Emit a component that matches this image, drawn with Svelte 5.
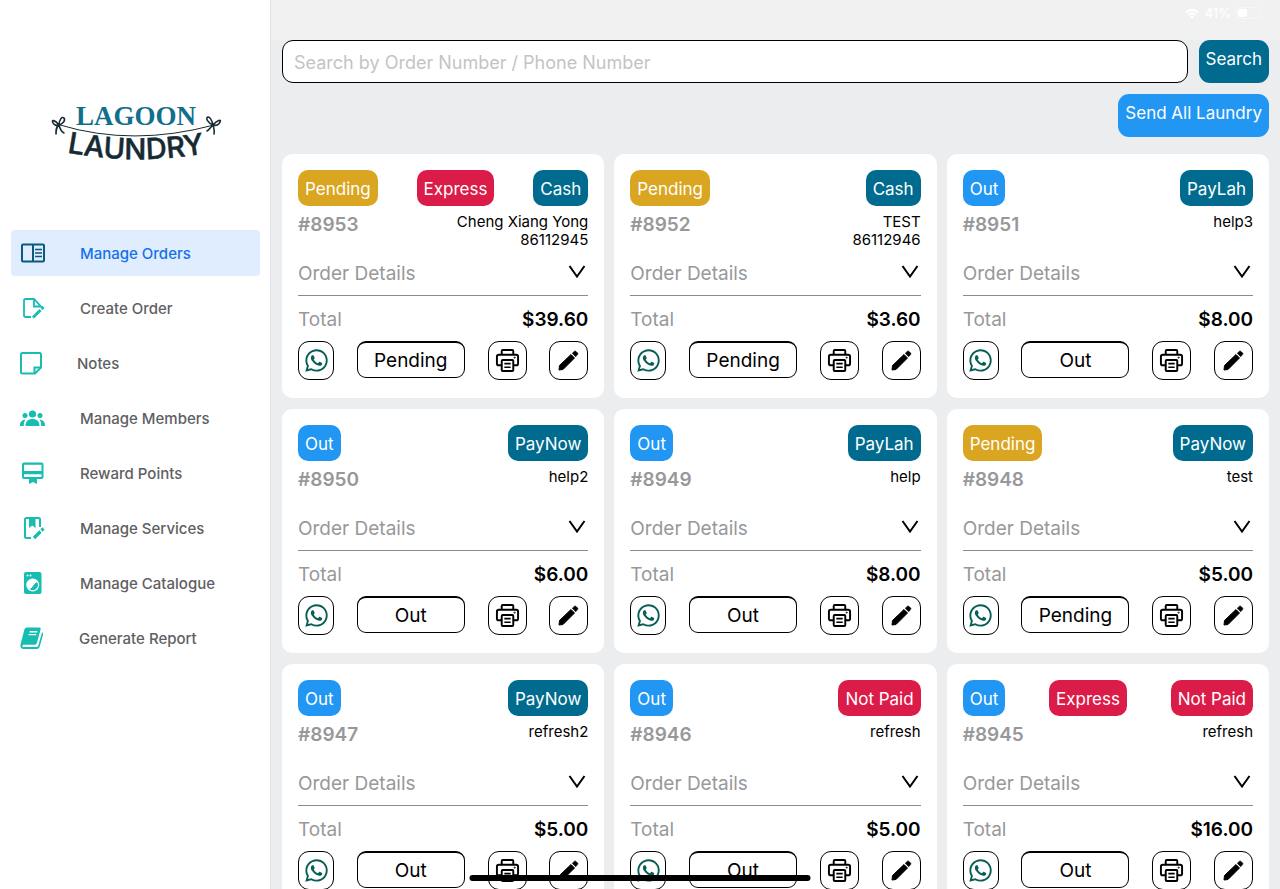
<script>
  const nav = [
    { label: 'Manage Orders', icon: 'orders', active: true },
    { label: 'Create Order', icon: 'create' },
    { label: 'Notes', icon: 'notes' },
    { label: 'Manage Members', icon: 'members' },
    { label: 'Reward Points', icon: 'reward' },
    { label: 'Manage Services', icon: 'services' },
    { label: 'Manage Catalogue', icon: 'catalogue' },
    { label: 'Generate Report', icon: 'report' }
  ];

  const orders = [
    { id: 8953, status: 'Pending', express: true, pay: 'Cash', name: 'Cheng Xiang Yong', phone: '86112945', total: '39.60' },
    { id: 8952, status: 'Pending', pay: 'Cash', name: 'TEST', phone: '86112946', total: '3.60' },
    { id: 8951, status: 'Out', pay: 'PayLah', name: 'help3', total: '8.00' },
    { id: 8950, status: 'Out', pay: 'PayNow', name: 'help2', total: '6.00' },
    { id: 8949, status: 'Out', pay: 'PayLah', name: 'help', total: '8.00' },
    { id: 8948, status: 'Pending', pay: 'PayNow', name: 'test', total: '5.00' },
    { id: 8947, status: 'Out', pay: 'PayNow', name: 'refresh2', total: '5.00' },
    { id: 8946, status: 'Out', pay: 'Not Paid', name: 'refresh', total: '5.00' },
    { id: 8945, status: 'Out', express: true, pay: 'Not Paid', name: 'refresh', total: '16.00' }
  ];
</script>

<div class="app">
  <aside class="sidebar">
    <svg class="logo" viewBox="0 0 180 74" role="img" aria-label="Lagoon Laundry">
      <defs><path id="line" d="M18 51 Q90 65 162 52" /></defs>
      <text class="lagoon" x="90" y="24" text-anchor="middle">LAGOON</text>
      <text class="laundry"><textPath href="#line" startOffset="50%" text-anchor="middle">LAUNDRY</textPath></text>
      <g fill="none" stroke="#152a31" stroke-linecap="round" stroke-linejoin="round">
        <path stroke-width="1" d="M14 24 Q87 46 168 24" />
        <path stroke-width="1.6" d="M13 24 C9 19 5 18 7 22 C8 24 11 25 13 24 C13 19 16 15 18 17 C20 20 16 23 13 24 C10 26 10 29 10 33 M13 24 C14 28 16 31 18 32" />
        <path stroke-width="1.6" d="M167 24 C162 22 159 17 162 16 C165 16 166 20 167 24 C171 19 176 18 174 21 C173 24 170 25 167 24 C164 27 163 29 161 30 M167 24 C168 28 169 30 168 33" />
      </g>
    </svg>
    <nav>
      {#each nav as item}
        <a href="#{item.icon}" class:active={item.active} aria-current={item.active ? 'page' : undefined}>
          <svg class="nav-icon {item.icon}" viewBox={item.icon === 'notes' ? '0 0 22 24' : '0 0 25 24'} aria-hidden="true">
            {#if item.icon === 'orders'}
              <g fill="none" stroke="currentColor" stroke-width="2"><rect x="2" y="3.5" width="22" height="17" rx="1" /><path d="M13 4v16" /><path stroke-width="1.6" d="M15 8.500h7M15 12h7M15 15.500h7" /></g>
            {:else if item.icon === 'create'}
              <g fill="none" stroke="currentColor" stroke-width="1.8"><path d="M11 21H5.500Q4 21 4 19.500V4.500Q4 3 5.500 3H14L21 10.500H14V3" /><path stroke-width="3" d="M13 21.500l7.500-7.500M21.500 13l2-2" /></g>
            {:else if item.icon === 'notes'}
              <g fill="none" stroke="currentColor" stroke-width="2"><path d="M2.500 2H19.500Q21 2 21 3.500V16.500L15 22.500H2.500Q1 22.500 1 21V3.500Q1 2 2.500 2z" /><path d="M14.500 22.500V16.500H21" /></g>
            {:else if item.icon === 'members'}
              <g fill="currentColor"><circle cx="12.500" cy="8" r="3.600" /><circle cx="5" cy="9.500" r="2.500" /><circle cx="20" cy="9.500" r="2.500" /><path d="M5.500 20C5.500 15.500 8 13 12.500 13s7 2.500 7 7zM0 20c0-4 1.500-6 5.500-6.500C4 15.500 3.800 17 3.800 20zM25 20c0-4-1.500-6-5.500-6.500C21 15.500 21.200 17 21.200 20z" /></g>
            {:else if item.icon === 'reward'}
              <path fill="currentColor" fill-rule="evenodd" d="M4 1.500H21.500Q23.500 1.500 23.500 3.500V16Q23.500 18 21.500 18H17v5l-4-2-4 2v-5H4Q2 18 2 16V3.500Q2 1.500 4 1.500zM4 3.700V10H21.500V3.700zM4 13.200V16H21.500V13.200z" />
            {:else if item.icon === 'services'}
              <g fill="none" stroke="currentColor" stroke-width="2"><path d="M11 22H6.500Q5 22 5 20.500V3.500Q5 2 6.500 2H18.500Q20 2 20 3.500V11" /><path fill="currentColor" stroke="none" d="M9 2h6.500v10L12.200 9.500 9 12z" /><path stroke-width="3.200" d="M14 22l6.500-6.500M21.500 14.500l2-2" /></g>
            {:else if item.icon === 'catalogue'}
              <rect x="4" y="1" width="17.500" height="22" rx="2" fill="currentColor" /><g fill="#fff"><circle cx="7.500" cy="4.500" r="1" /><circle cx="10.500" cy="4.500" r="1" /></g><circle cx="12.700" cy="14" r="6.500" fill="#fff" /><path fill="currentColor" d="M17 11A5.200 5.200 0 0 1 9.500 18Q12 17 13.300 14.500T17 11z" />
            {:else}
              <path fill="currentColor" d="M7 1H20Q22 1 21.500 3L17.500 17.500Q17 19 15.500 19H4Q2.500 19 2.500 20.300T4 21.500H17Q18.500 21.500 19 20L23 6Q24.500 6.500 24 8.500L20.500 21Q19.800 23.500 17.500 23.500H4Q0 23.500 .5 19L4.500 3.500Q5.200 1 7 1z" /><path stroke="#fff" stroke-width="1.500" d="M10 5.500h8M9 8.500h8" />
            {/if}
          </svg>
          <span>{item.label}</span>
        </a>
      {/each}
    </nav>
  </aside>

  <main>
    <div class="statusbar">
      <svg width="14" height="11" viewBox="0 0 14 11" aria-hidden="true"><path fill="none" stroke="#fff" stroke-width="2" d="M1 4.500Q7-1 13 4.500M3.300 7Q7 3.500 10.700 7" /><path fill="#fff" d="M4.800 8.500Q7 6.700 9.200 8.500L7 11z" /></svg>
      <span>41%</span>
      <svg width="27" height="12" viewBox="0 0 27 12" aria-hidden="true"><rect x=".5" y=".5" width="23" height="11" rx="3.500" fill="none" stroke="#f7f7f7" /><rect x="2" y="2" width="9" height="8" rx="2" fill="#fff" /><path fill="#f7f7f7" d="M25 4q2 2 0 4z" /></svg>
    </div>
    <div class="content">
      <form class="search" onsubmit={(e) => e.preventDefault()}>
        <input type="text" aria-label="Search orders" placeholder="Search by Order Number / Phone Number" />
        <button class="action teal">Search</button>
      </form>
      <div class="bulk"><button class="action blue">Send All Laundry</button></div>

      <div class="grid">
        {#each orders as o}
          <article>
            <div class="row tags">
              <span class="tag" class:gold={o.status === 'Pending'} class:blue={o.status === 'Out'}>{o.status}</span>
              {#if o.express}<span class="tag red">Express</span>{/if}
              <span class="tag" class:red={o.pay === 'Not Paid'} class:teal={o.pay !== 'Not Paid'}>{o.pay}</span>
            </div>
            <div class="row who">
              <h2>#{o.id}</h2>
              <p>{o.name}{#if o.phone}<br />{o.phone}{/if}</p>
            </div>
            <button class="row details">
              <span>Order Details</span>
              <svg width="22" height="18" viewBox="0 0 22 18" aria-hidden="true"><path d="M3.500 2L11 12.500L18.500 2" fill="none" stroke="#000" stroke-width="2" /></svg>
            </button>
            <div class="row total"><span>Total</span><strong>${o.total}</strong></div>
            <div class="row controls">
              <button class="tool chat" aria-label="WhatsApp">
                <svg width="27" height="27" viewBox="0 0 24 24" aria-hidden="true"><path fill="#075e54" d="M12.040 2C6.580 2 2.130 6.450 2.130 11.910C2.130 13.660 2.590 15.360 3.450 16.860L2.050 22L7.300 20.620C8.750 21.410 10.380 21.830 12.040 21.830C17.500 21.830 21.950 17.380 21.950 11.920C21.950 9.270 20.920 6.780 19.050 4.910C17.180 3.030 14.690 2 12.040 2M12.050 3.670C14.250 3.670 16.310 4.530 17.870 6.090C19.420 7.650 20.280 9.720 20.280 11.920C20.280 16.460 16.580 20.150 12.040 20.150C10.560 20.150 9.110 19.760 7.850 19L7.550 18.830L4.430 19.650L5.260 16.610L5.060 16.290C4.240 15 3.800 13.470 3.800 11.910C3.810 7.370 7.500 3.670 12.050 3.670M8.530 7.330C8.370 7.330 8.100 7.390 7.870 7.640C7.650 7.890 7 8.500 7 9.710C7 10.930 7.890 12.100 8 12.270C8.140 12.440 9.760 14.940 12.250 16C12.840 16.270 13.300 16.420 13.660 16.530C14.250 16.720 14.790 16.690 15.220 16.630C15.700 16.560 16.680 16.030 16.890 15.450C17.100 14.870 17.100 14.380 17.040 14.270C16.970 14.170 16.810 14.110 16.560 14C16.310 13.860 15.090 13.260 14.870 13.180C14.640 13.100 14.500 13.060 14.310 13.300C14.150 13.550 13.670 14.110 13.530 14.270C13.380 14.440 13.240 14.460 13 14.340C12.740 14.210 11.940 13.950 11 13.110C10.260 12.450 9.770 11.640 9.620 11.390C9.500 11.150 9.610 11 9.730 10.890C10 10.600 10.300 10.250 10.350 10.070C10.430 9.900 10.390 9.760 10.330 9.640L9.560 7.790C9.360 7.300 9.150 7.340 9 7.330z" /></svg>
              </button>
              <button class="status">{o.status}</button>
              <button class="tool" aria-label="Print">
                <svg width="25" height="25" viewBox="0 0 26 26" fill="none" stroke="#000" stroke-width="2" stroke-linejoin="round" aria-hidden="true"><path d="M7 6.500V3Q7 2 8 2h10Q19 2 19 3v3.500M7 18H4Q2 18 2 16V9Q2 7 4 7H22Q24 7 24 9v7Q24 18 22 18H19" /><rect x="7" y="12.500" width="12" height="11.500" rx="1" /><path stroke-width="1.700" d="M9.700 16.200h6.600M9.700 20h6.600" /><circle cx="20.500" cy="10" r=".6" stroke-width="1" /></svg>
              </button>
              <button class="tool" aria-label="Edit">
                <svg width="25" height="25" viewBox="0 0 25 25" aria-hidden="true"><path d="M3.500 17.500L15 6.500 18.500 10 7 21.500 3 22z" stroke="#000" stroke-width="1" stroke-linejoin="round" /><path d="M16.300 5.200L18.500 3.200Q19.300 2.700 20 3.400L21.700 5.100Q22.200 5.900 21.600 6.600L19.700 8.700z" stroke="#000" stroke-width=".6" /></svg>
              </button>
            </div>
          </article>
        {/each}
      </div>
    </div>
  </main>
  <div class="home-bar"></div>
</div>

<style>
  :global(body) { overflow: hidden; }
  .app {
    display: flex;
    height: 100vh;
    font-family: Inter, "Liberation Sans", sans-serif;
    color: #000;
  }
  .app * { box-sizing: border-box; }
  button, input { font: inherit; color: inherit; margin: 0; }
  button { cursor: pointer; }
  svg { display: block; flex: none; }

  .sidebar {
    flex: none;
    width: 271px;
    padding: 101px 10px 0 11px;
    border-right: 1px solid #e0e2e5;
    background: #fff;
  }
  .logo { width: 180px; height: 74px; margin: 0 auto 55px; }
  .lagoon { font: bold 27px "Liberation Serif", serif; fill: #126f8b; }
  .laundry {
    font: 500 29px Inter, sans-serif;
    fill: #152a31;
    stroke: #152a31;
    stroke-width: 0.5px;
    stroke-linejoin: round;
  }
  nav { display: flex; flex-direction: column; gap: 9px; }
  nav a {
    display: flex;
    align-items: center;
    gap: 35px;
    height: 46px;
    padding-left: 9px;
    border-radius: 4px;
    font-size: 15px;
    font-weight: 500;
    color: #606062;
    text-decoration: none;
  }
  nav a.active { background: #dfedfe; color: #1472eb; }
  .nav-icon { width: 25px; height: 24px; color: #17bdb0; }
  .nav-icon.orders { color: #0b5a7c; }
  .nav-icon.notes { width: 22px; }
  .nav-icon.report { width: 24px; }

  main { flex: 1; min-width: 0; background: #ebedef; overflow: hidden; }
  .statusbar {
    display: flex;
    align-items: center;
    justify-content: flex-end;
    gap: 5px;
    height: 40px;
    padding: 0 17px 14px 0;
    background: #f1f1f1;
    color: #fff;
    font-size: 13px;
    font-weight: 500;
  }
  .content { padding: 0 11px; }
  .search { display: flex; gap: 11px; height: 43px; }
  .search input {
    flex: 1;
    min-width: 0;
    padding: 2px 11px 0;
    border: 1px solid #000;
    border-radius: 11px;
    background: #fff;
    font-size: 18px;
  }
  .search input::placeholder { color: #c4c4c6; opacity: 1; }
  .action {
    flex: none;
    height: 43px;
    padding: 0 7px 6px;
    border: 0;
    border-radius: 11px;
    color: #fff;
    font-size: 17px;
  }
  .bulk { display: flex; justify-content: flex-end; padding: 11px 0 17px; }
  .teal { background: #006b8f; }
  .blue { background: #2196f3; }
  .gold { background: #daa520; }
  .red { background: #dc1c48; }

  .grid {
    display: grid;
    grid-template-columns: repeat(3, minmax(0, 1fr));
    gap: 11px 10px;
  }
  article { padding: 16px 16px 18px; border-radius: 10px; background: #fff; }
  .row { display: flex; justify-content: space-between; }
  .tag {
    height: 36px;
    padding: 0 7px;
    border-radius: 10px;
    color: #fff;
    font-size: 17px;
    line-height: 38px;
  }
  .who { height: 49px; padding-top: 7px; }
  h2 { margin: 0; font-size: 19px; font-weight: 600; line-height: 24px; color: #98989a; }
  p { margin: 0; font-size: 15px; line-height: 18px; text-align: right; }
  .details {
    align-items: center;
    width: 100%;
    height: 41px;
    padding: 0 0 4px;
    border: 0;
    border-bottom: 1px solid #8c8c8c;
    background: none;
    color: #98989a;
    font-size: 19px;
  }
  .total { align-items: center; height: 45px; padding-top: 2px; font-size: 19px; color: #98989a; }
  .total strong { font-weight: 600; color: #000; }
  .controls { align-items: flex-start; }
  .tool {
    display: flex;
    align-items: center;
    justify-content: center;
    width: 39px;
    height: 39px;
    padding: 0;
    border: 1px solid #000;
    border-radius: 11px;
    background: #fff;
  }
  .chat { width: 36px; }
  .status {
    width: 108px;
    height: 37px;
    padding: 0;
    border: 1px solid #000;
    border-top-width: 2px;
    border-radius: 9px;
    background: #fff;
    font-size: 19px;
  }
  .home-bar {
    position: fixed;
    left: 50%;
    bottom: 8px;
    width: 341px;
    height: 6px;
    border-radius: 3px;
    background: #000;
    transform: translateX(-50%);
  }
</style>
